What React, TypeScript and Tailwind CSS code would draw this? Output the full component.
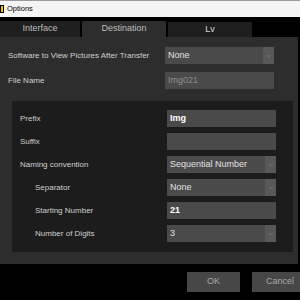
import { ChevronDown } from 'lucide-react'

const font = { fontFamily: '"Liberation Sans", Arial, sans-serif' }

function Select({ value }: { value: string }) {
  return (
    <div className="flex h-[17px] w-[109px] items-stretch bg-[#4a4a4a]">
      <div className="flex flex-1 items-center whitespace-nowrap pl-[3px] text-[9px] text-[#e2e2e2]">{value}</div>
      <div className="flex w-[11px] items-center justify-center bg-[#585858]">
        <ChevronDown size={6} strokeWidth={2} className="text-[#9a9a9a]" />
      </div>
    </div>
  )
}

function Input({ value, dim }: { value?: string; dim?: boolean }) {
  return (
    <div
      className={
        'flex h-[17px] w-[109px] items-center whitespace-nowrap bg-[#4a4a4a] pl-[3px] text-[9px] ' +
        (dim ? 'text-[#8e8e8e]' : 'text-white font-bold')
      }
    >
      {value}
    </div>
  )
}

function Row({ label, sub, children }: { label: string; sub?: boolean; children: React.ReactNode }) {
  return (
    <div className="flex h-[17px] items-center">
      <div className={'w-[155px] whitespace-nowrap text-[8px] text-[#d0d0d0] ' + (sub ? 'pl-[23px]' : 'pl-[8px]')}>
        {label}
      </div>
      {children}
    </div>
  )
}

export default function App() {
  return (
    <div className="relative h-[300px] w-[300px] overflow-hidden bg-black" style={font}>
      {/* title bar */}
      <div className="flex h-[17px] items-center border-t border-[#9c9c9c] bg-[#f4f4f4]">
        <div className="h-[8px] w-[4px] border border-black bg-[#f2c200]" />
        <span className="ml-[3px] text-[7.5px] text-black">Options</span>
      </div>

      {/* tabs */}
      <div className="mt-[4px] flex h-[16px] items-end">
        <div className="flex h-[16px] w-[80px] items-center justify-center bg-[#1f1f1f] text-[9px] text-[#bdbdbd]">
          Interface
        </div>
        <div className="ml-[2px] flex h-[16px] w-[84px] items-center justify-center bg-[#2d2d2d] text-[9px] text-[#bdbdbd]">
          Destination
        </div>
        <div className="ml-[2px] flex h-[15px] w-[84px] items-center justify-center bg-[#1e1e1e] text-[9px] text-[#d8d8d8]">
          Lv
        </div>
      </div>

      {/* main panel */}
      <div className="flex h-[227px] w-[298px] flex-col bg-[#2d2d2d] pt-[10px]">
        <div className="flex h-[17px] items-center">
          <div className="w-[165px] whitespace-nowrap pl-[8px] text-[8px] text-[#d0d0d0]">
            Software to View Pictures After Transfer
          </div>
          <Select value="None" />
        </div>
        <div className="mt-[8px] flex h-[17px] items-center">
          <div className="w-[165px] pl-[8px] text-[8px] text-[#d0d0d0]">File Name</div>
          <Input value="Img021" dim />
        </div>

        <div className="ml-[12px] mt-[12px] flex h-[151px] w-[281px] flex-col gap-[6px] bg-[#1c1c1c] pt-[9px]">
          <Row label="Prefix">
            <Input value="Img" />
          </Row>
          <Row label="Suffix">
            <Input />
          </Row>
          <Row label="Naming convention">
            <Select value="Sequential Number" />
          </Row>
          <Row label="Separator" sub>
            <Select value="None" />
          </Row>
          <Row label="Starting Number" sub>
            <Input value="21" />
          </Row>
          <Row label="Number of Digits" sub>
            <Select value="3" />
          </Row>
        </div>
      </div>

      {/* buttons */}
      <div className="mt-[8px] flex h-[20px] gap-[12px] pl-[187px]">
        <div className="flex h-[20px] w-[53px] shrink-0 items-center justify-center bg-[#474747] text-[9px] text-[#a8a8a8]">
          OK
        </div>
        <div className="flex h-[20px] w-[56px] shrink-0 items-center justify-center bg-[#474747] text-[9px] text-[#a8a8a8]">
          Cancel
        </div>
      </div>
    </div>
  )
}
